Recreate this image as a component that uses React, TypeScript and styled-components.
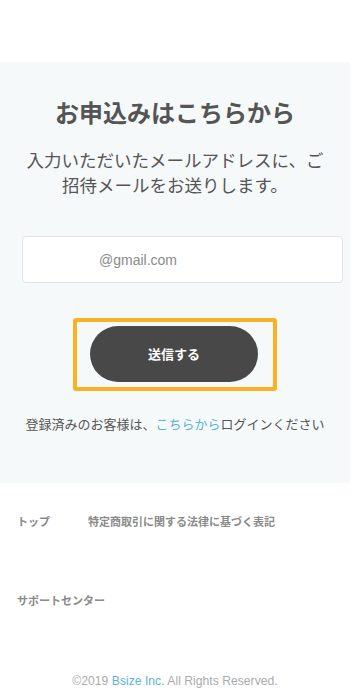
import React from "react";
import styled, { createGlobalStyle } from "styled-components";

const Global = createGlobalStyle`
  html, body { margin: 0; padding: 0; background: #ffffff; }
  body { font-family: "Liberation Sans", "Noto Sans CJK JP", sans-serif; }
  * { box-sizing: border-box; }
`;

const Page = styled.div`
  width: 350px;
  padding-top: 62px;
  display: flex;
  flex-direction: column;
`;

const Panel = styled.section`
  background: #f5f9fa;
  padding: 34px 0 48px;
  display: flex;
  flex-direction: column;
  align-items: center;
`;

const Title = styled.h1`
  margin: 0;
  font-size: 24px;
  line-height: 36px;
  font-weight: 700;
  color: #555555;
  text-align: center;
`;

const Lead = styled.p`
  margin: 17px 0 0;
  font-size: 17.5px;
  line-height: 25px;
  color: #555555;
  text-align: center;
  padding: 0 22px;
`;

const EmailField = styled.input`
  margin: 37px 0 0 22px;
  align-self: stretch;
  width: 321px;
  height: 47px;
  border: 1px solid #e3e3e3;
  border-radius: 4px;
  background: #ffffff;
  padding: 0 0 0 76px;
  font-family: "Liberation Sans", "Noto Sans CJK JP", sans-serif;
  font-size: 14px;
  color: #555;
  outline: none;
  &::placeholder { color: #8a8a8a; }
`;

const FocusFrame = styled.div`
  margin-top: 35px;
  border: 4px solid #fbb124;
  border-radius: 3px;
  padding: 4px 15px 5px 13px;
  display: flex;
`;

const SubmitButton = styled.button`
  width: 168px;
  height: 56px;
  border: none;
  border-radius: 28px;
  background: #484848;
  color: #ffffff;
  font-family: "Liberation Sans", "Noto Sans CJK JP", sans-serif;
  font-size: 13px;
  font-weight: 700;
  padding: 0 0 1px;
  cursor: pointer;
`;

const LoginNote = styled.p`
  margin: 24px 0 0;
  font-size: 13px;
  line-height: 20px;
  color: #555555;
  text-align: center;
  white-space: nowrap;
`;

const Link = styled.a`
  color: #5db4d8;
  text-decoration: none;
`;

const Footer = styled.footer`
  padding: 31px 17px 0;
  display: flex;
  flex-direction: column;
`;

const NavRow = styled.div`
  display: flex;
  height: 16px;
  align-items: center;
`;

const NavItem = styled.a<{ $w?: number }>`
  font-size: 11px;
  line-height: 16px;
  font-weight: 700;
  color: #8a8a8a;
  text-decoration: none;
  width: ${(p) => (p.$w ? `${p.$w}px` : "auto")};
  white-space: nowrap;
`;

const NavRowLower = styled(NavRow)`
  margin-top: 63px;
`;

const Copyright = styled.p`
  margin: 64px 0 0;
  font-size: 12.2px;
  line-height: 16px;
  color: #ababab;
  text-align: center;
`;

export default function App() {
  return (
    <>
      <Global />
      <Page>
        <Panel>
          <Title>お申込みはこちらから</Title>
          <Lead>
            入力いただいたメールアドレスに、ご
            <br />
            招待メールをお送りします。
          </Lead>
          <EmailField type="email" placeholder="@gmail.com" />
          <FocusFrame>
            <SubmitButton type="button">送信する</SubmitButton>
          </FocusFrame>
          <LoginNote>
            登録済みのお客様は、<Link href="#">こちらから</Link>ログインください
          </LoginNote>
        </Panel>
        <Footer>
          <NavRow>
            <NavItem href="#" $w={71}>トップ</NavItem>
            <NavItem href="#">特定商取引に関する法律に基づく表記</NavItem>
          </NavRow>
          <NavRowLower>
            <NavItem href="#">サポートセンター</NavItem>
          </NavRowLower>
        </Footer>
        <Copyright>
          ©2019 <Link href="#">Bsize Inc.</Link> All Rights Reserved.
        </Copyright>
      </Page>
    </>
  );
}
